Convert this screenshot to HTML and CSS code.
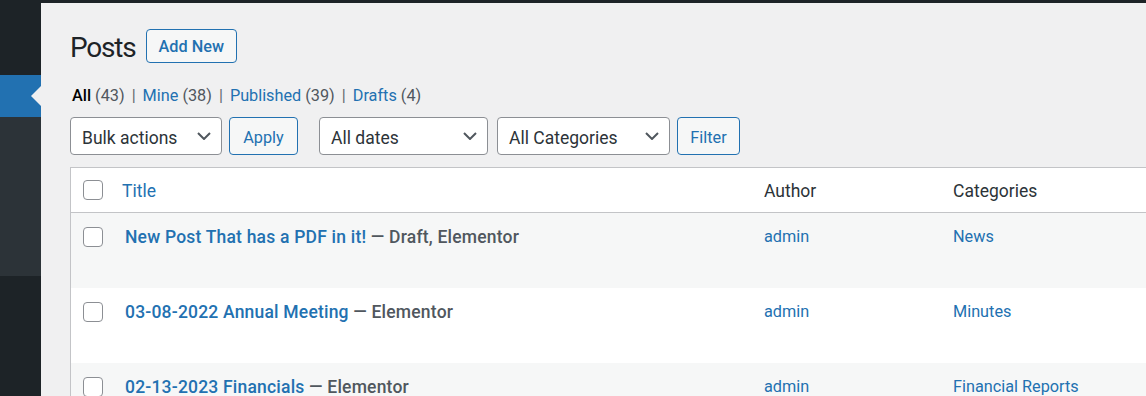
FILE: index.html
```html
<!DOCTYPE html>
<html>
<head>
	<title>Posts</title>
	<link rel="stylesheet" href="styles.css">
</head>
<body>

<div class="adminbar"></div>

<div class="layout">
	<div class="sidebar">
		<div class="menu-current"></div>
		<div class="submenu"></div>
	</div>

	<div class="content">
		<div class="title-row">
			<h1>Posts</h1>
			<a class="page-title-action" href="#">Add New</a>
		</div>

		<ul class="subsubsub">
			<li><a class="current" href="#">All <span class="count">(43)</span></a> <span class="sep">|</span></li>
			<li><a href="#">Mine <span class="count">(38)</span></a> <span class="sep">|</span></li>
			<li><a href="#">Published <span class="count">(39)</span></a> <span class="sep">|</span></li>
			<li><a href="#">Drafts <span class="count">(4)</span></a></li>
		</ul>

		<div class="tablenav">
			<div class="select bulk">Bulk actions
				<svg class="chevron" viewBox="0 0 14 8"><path d="M1 1l6 6 6-6" fill="none" stroke="#50575e" stroke-width="2"/></svg>
			</div>
			<a class="button apply" href="#">Apply</a>
			<div class="select dates">All dates
				<svg class="chevron" viewBox="0 0 14 8"><path d="M1 1l6 6 6-6" fill="none" stroke="#50575e" stroke-width="2"/></svg>
			</div>
			<div class="select cats">All Categories
				<svg class="chevron" viewBox="0 0 14 8"><path d="M1 1l6 6 6-6" fill="none" stroke="#50575e" stroke-width="2"/></svg>
			</div>
			<a class="button filter" href="#">Filter</a>
		</div>

		<table class="widefat">
			<thead>
				<tr>
					<td class="check-column"><span class="checkbox"></span></td>
					<th class="col-title"><a href="#">Title</a></th>
					<th class="col-author">Author</th>
					<th class="col-cats">Categories</th>
				</tr>
			</thead>
			<tbody>
				<tr class="alt">
					<td class="check-column"><span class="checkbox"></span></td>
					<td class="col-title"><strong><a class="row-title" href="#">New Post That has a PDF in it!</a> <span class="post-state">&mdash; Draft, Elementor</span></strong></td>
					<td class="col-author"><a href="#">admin</a></td>
					<td class="col-cats"><a href="#">News</a></td>
				</tr>
				<tr>
					<td class="check-column"><span class="checkbox"></span></td>
					<td class="col-title"><strong><a class="row-title" href="#">03-08-2022 Annual Meeting</a> <span class="post-state">&mdash; Elementor</span></strong></td>
					<td class="col-author"><a href="#">admin</a></td>
					<td class="col-cats"><a href="#">Minutes</a></td>
				</tr>
				<tr class="alt">
					<td class="check-column"><span class="checkbox"></span></td>
					<td class="col-title"><strong><a class="row-title" href="#">02-13-2023 Financials</a> <span class="post-state">&mdash; Elementor</span></strong></td>
					<td class="col-author"><a href="#">admin</a></td>
					<td class="col-cats"><a href="#">Financial Reports</a></td>
				</tr>
			</tbody>
		</table>
	</div>
</div>

</body>
</html>
```

FILE: styles.css
```css
BODY {
    margin : 0;
    height : 396px;
    overflow : hidden;
    background : #f0f0f1;
    font-family : Roboto, "Liberation Sans", sans-serif;
    color : #3c434a;
}
A {
    color : #2271b1;
    text-decoration : none;
}
.adminbar {
    height : 3px;
    background : #1d2327;
}
.layout {
    display : flex;
    height : 393px;
}

/* folded admin menu */
.sidebar {
    flex : none;
    width : 41px;
    padding-top : 72px;
    background : #1d2327;
}
.menu-current {
    position : relative;
    height : 42px;
    background : #2271b1;
}
.menu-current::after {
    content : "";
    position : absolute;
    right : 0;
    top : 11px;
    border-style : solid;
    border-color : transparent #f0f0f1 transparent transparent;
    border-width : 10px 10px 10px 0;
}
.submenu {
    height : 159px;
    background : #2c3338;
}

.content {
    flex : 1;
    min-width : 0;
    overflow : hidden;
    padding-left : 29px;
}

/* heading */
.title-row {
    display : flex;
    align-items : center;
    gap : 10px;
    padding-top : 26px;
}
.title-row H1 {
    margin : 0;
    font-size : 28px;
    font-weight : 400;
    letter-spacing : -1.2px;
    line-height : 33px;
    color : #1d2327;
    position : relative;
    top : 1px;
}
.page-title-action {
    display : flex;
    align-items : center;
    box-sizing : border-box;
    height : 34px;
    padding : 0 12px;
    border : 1px solid #2271b1;
    border-radius : 4px;
    background : #f6f7f7;
    font-size : 16.25px;
    font-weight : 500;
}

/* view filters */
.subsubsub {
    display : flex;
    margin : 21px 0 0 2px;
    padding : 0;
    list-style : none;
    font-size : 16.25px;
    line-height : 24px;
    color : #646970;
}
.subsubsub LI {
    margin-right : 7px;
}
.subsubsub .sep {
    margin-left : 3px;
}
.subsubsub .current {
    color : #000;
    font-weight : 500;
}
.subsubsub .count {
    color : #50575e;
    font-weight : 400;
}

/* bulk actions and filters */
.tablenav {
    display : flex;
    margin-top : 9px;
    height : 38px;
}
.select, .button {
    display : flex;
    align-items : center;
    box-sizing : border-box;
    height : 38px;
    border-radius : 4px;
}
.select {
    justify-content : space-between;
    padding : 3px 10px 0 11px;
    border : 1px solid #8c8f94;
    background : #fff;
    font-size : 17.5px;
    color : #2c3338;
}
.chevron {
    width : 14px;
    height : 8px;
    margin-top : -3px;
}
.button {
    justify-content : center;
    padding-top : 2px;
    border : 1px solid #2271b1;
    background : #f6f7f7;
    font-size : 16.25px;
}
.bulk { width : 152px; }
.apply { width : 69px; margin-left : 7px; }
.dates { width : 169px; margin-left : 21px; }
.cats { width : 173px; margin-left : 9px; }
.filter { width : 63px; margin-left : 7px; }

/* posts table */
.widefat {
    margin-top : 12px;
    width : 1180px;
    border : 1px solid #c3c4c7;
    border-collapse : collapse;
    background : #fff;
    table-layout : fixed;
}
.widefat TH, .widefat TD {
    padding : 11px 0 9px 11px;
    text-align : left;
    vertical-align : top;
    line-height : 24px;
}
.widefat THEAD TH, .widefat THEAD TD {
    height : 24px;
    border-bottom : 1px solid #c3c4c7;
    font-size : 17.5px;
    font-weight : 400;
    color : #2c3338;
}
.widefat TBODY TD {
    height : 51px;
    padding-top : 12px;
    padding-bottom : 12px;
    font-size : 16.25px;
}
.widefat TBODY TR.alt {
    background : #f6f7f7;
}
.check-column { width : 29px; }
.col-title { width : 631px; }
.col-author { width : 178px; }
.widefat TBODY .col-title {
    padding-left : 14px;
}
.checkbox {
    display : block;
    box-sizing : border-box;
    width : 20px;
    height : 20px;
    margin-left : 1px;
    border : 1px solid #8c8f94;
    border-radius : 4px;
    background : #fff;
}
.widefat TBODY .checkbox {
    margin-top : 2px;
}
.widefat THEAD .checkbox {
    margin-top : 1px;
}
.col-title STRONG {
    font-size : 17.5px;
    font-weight : 500;
    letter-spacing : 0.2px;
}
.post-state {
    color : #50575e;
}
```
